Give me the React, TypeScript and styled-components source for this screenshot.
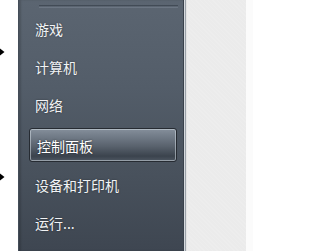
import React from 'react';
import styled, { createGlobalStyle } from 'styled-components';

const GlobalStyle = createGlobalStyle`
  html, body {
    margin: 0;
    padding: 0;
    background: #ffffff;
  }
  body {
    font-family: "Noto Sans CJK SC", "Noto Sans", sans-serif;
  }
`;

const items = [
  { label: '游戏' },
  { label: '计算机' },
  { label: '网络' },
  { label: '控制面板', active: true },
  { label: '设备和打印机' },
  { label: '运行...' },
];

function ArrowTip() {
  return (
    <svg width="6" height="8" viewBox="0 0 6 8">
      <polygon points="0,0.5 4.5,4 0,7.5" fill="#000" />
    </svg>
  );
}

export default function App() {
  return (
    <>
      <GlobalStyle />
      <Screen>
        <Gutter>
          <Pointer top={48}>
            <ArrowTip />
          </Pointer>
          <Pointer top={173}>
            <ArrowTip />
          </Pointer>
        </Gutter>
        <Panel>
          <Separator />
          <MenuList>
            {items.map((item) =>
              item.active ? (
                <ActiveItem key={item.label}>{item.label}</ActiveItem>
              ) : (
                <MenuItem key={item.label}>{item.label}</MenuItem>
              )
            )}
          </MenuList>
        </Panel>
        <Edge />
        <Desktop />
        <Margin />
      </Screen>
    </>
  );
}

const Screen = styled.div`
  display: flex;
  width: 253px;
  height: 251px;
  overflow: hidden;
  background: #ffffff;
`;

const Gutter = styled.div`
  position: relative;
  width: 18px;
  flex-shrink: 0;
`;

const Pointer = styled.div<{ top: number }>`
  position: absolute;
  left: 0;
  top: ${({ top }) => top}px;
  line-height: 0;
`;

const Panel = styled.div`
  width: 166px;
  flex-shrink: 0;
  display: flex;
  flex-direction: column;
  box-sizing: border-box;
  border-left: 1px solid #444d58;
  background: linear-gradient(180deg, #5b6571 0%, #535d69 35%, #48515c 70%, #3e4651 100%);
  box-shadow: inset 2px 0 2px rgba(0, 0, 0, 0.15), inset -1px 0 0 #3a424c;
`;

const Separator = styled.div`
  margin: 5px 6px 0 20px;
  height: 1px;
  border-top: 1px solid #424b56;
  border-bottom: 1px solid #6c7683;
`;

const MenuList = styled.ul`
  list-style: none;
  margin: 0;
  padding: 2px 7px 0 10px;
  display: flex;
  flex-direction: column;
`;

const MenuItem = styled.li`
  height: 38px;
  display: flex;
  align-items: center;
  padding-left: 6px;
  font-size: 14px;
  color: #f1f3f5;
  text-shadow: 0 0 2px rgba(0, 0, 0, 0.45);
  white-space: nowrap;
`;

const ActiveItem = styled(MenuItem)`
  height: 34px;
  margin: 4px 0;
  padding: 2px 0 0 7px;
  box-sizing: border-box;
  border: 1px solid #262b32;
  border-radius: 3px;
  background: linear-gradient(180deg, #858f9b 0%, #6c7682 30%, #58616c 55%, #3b434d 85%, #4e5762 100%);
  box-shadow: inset 0 0 0 1px rgba(210, 218, 226, 0.55);
  color: #ffffff;
  text-shadow: 0 0 2px rgba(0, 0, 0, 0.7);
`;

const Edge = styled.div`
  width: 3px;
  flex-shrink: 0;
  background: linear-gradient(90deg, #d6dade 0%, #d6dade 33%, #9aa1a9 33%, #9aa1a9 66%, #e2e2e2 66%);
`;

const Desktop = styled.div`
  width: 59px;
  flex-shrink: 0;
  background-color: #ebebeb;
  background-image: repeating-linear-gradient(45deg, rgba(255, 255, 255, 0.12) 0 1px, transparent 1px 3px);
`;

const Margin = styled.div`
  flex: 1;
  background: #fbfbfb;
`;
